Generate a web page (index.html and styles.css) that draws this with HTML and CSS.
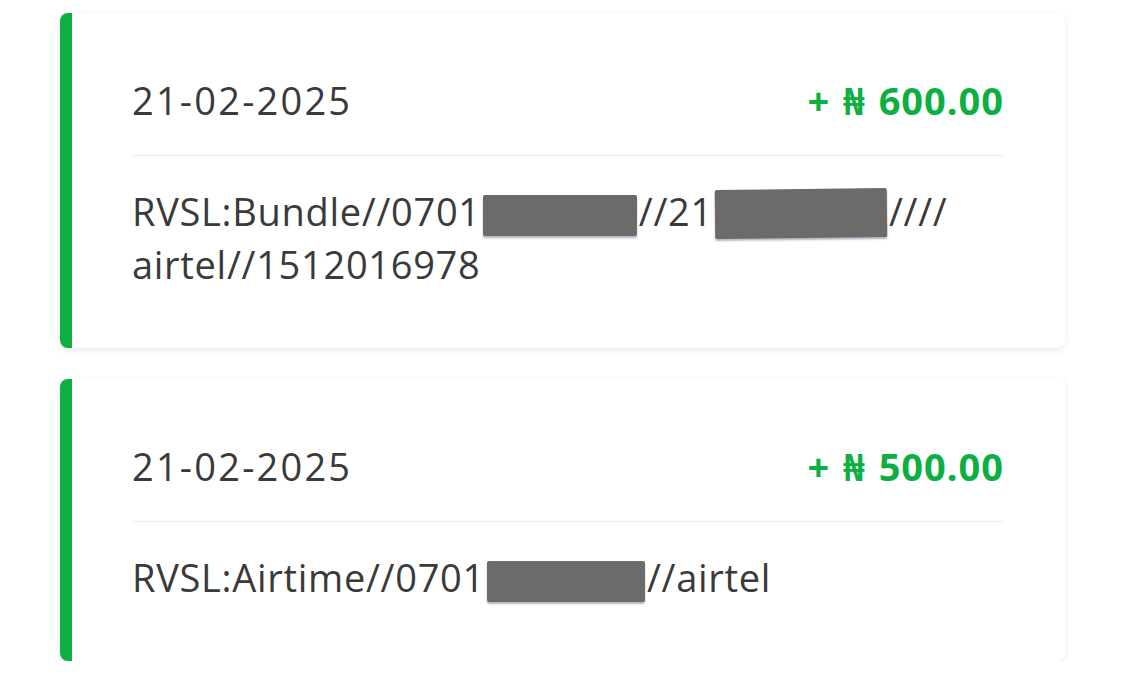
FILE: index.html
```html
<!DOCTYPE html>
<html lang="en">
<head>
<meta charset="utf-8">
<title>Transactions</title>
<link rel="stylesheet" href="styles.css">
</head>
<body>
<main class="list">
  <article class="card">
    <div class="card-head">
      <span class="date">21-02-2025</span>
      <span class="amount">+ ₦ 600.00</span>
    </div>
    <p class="desc">RVSL:Bundle//0701<span class="redact r1"></span>//21<span class="redact r2"></span>////<br>airtel//1512016978</p>
  </article>
  <article class="card">
    <div class="card-head">
      <span class="date">21-02-2025</span>
      <span class="amount">+ ₦ 500.00</span>
    </div>
    <p class="desc">RVSL:Airtime//0701<span class="redact r3"></span>//airtel</p>
  </article>
</main>
</body>
</html>
```
FILE: styles.css
```css
* { box-sizing: border-box; }
html, body { margin: 0; background: #ffffff; }
body {
  font-family: "Open Sans", "Noto Sans", sans-serif;
  color: #3a3a3a;
}
.list {
  width: 1005px;
  margin-left: 60px;
  padding-top: 13px;
  display: flex;
  flex-direction: column;
  gap: 31px;
}
.card {
  background: #fff;
  border-left: 12px solid #0cb042;
  border-radius: 8px;
  box-shadow: 0 2px 7px rgba(0, 0, 0, 0.09);
  padding: 61px 61px 58px 60px;
}
.card-head {
  display: flex;
  justify-content: space-between;
  align-items: baseline;
  font-size: 38px;
  line-height: 52px;
  padding-bottom: 29px;
  border-bottom: 1px solid #ececec;
}
.date { letter-spacing: 2.2px; }
.amount {
  color: #0cb042;
  font-weight: 700;
  font-family: "Noto Sans", "Open Sans", sans-serif;
  letter-spacing: 1px;
  word-spacing: 2px;
}
.desc {
  margin: 29px 0 0;
  font-size: 38px;
  line-height: 52px;
  letter-spacing: 0.7px;
}
.redact {
  display: inline-block;
  height: 41px;
  background: #6b6b6b;
  vertical-align: -10px;
  border-radius: 2px;
  box-shadow: 0 2px 2px rgba(40, 40, 90, 0.35);
  margin: 0 2px;
}
.r1 { width: 154px; }
.r2 { width: 172px; height: 49px; vertical-align: -12px; transform: rotate(-0.6deg); }
.r3 { width: 158px; }
```
